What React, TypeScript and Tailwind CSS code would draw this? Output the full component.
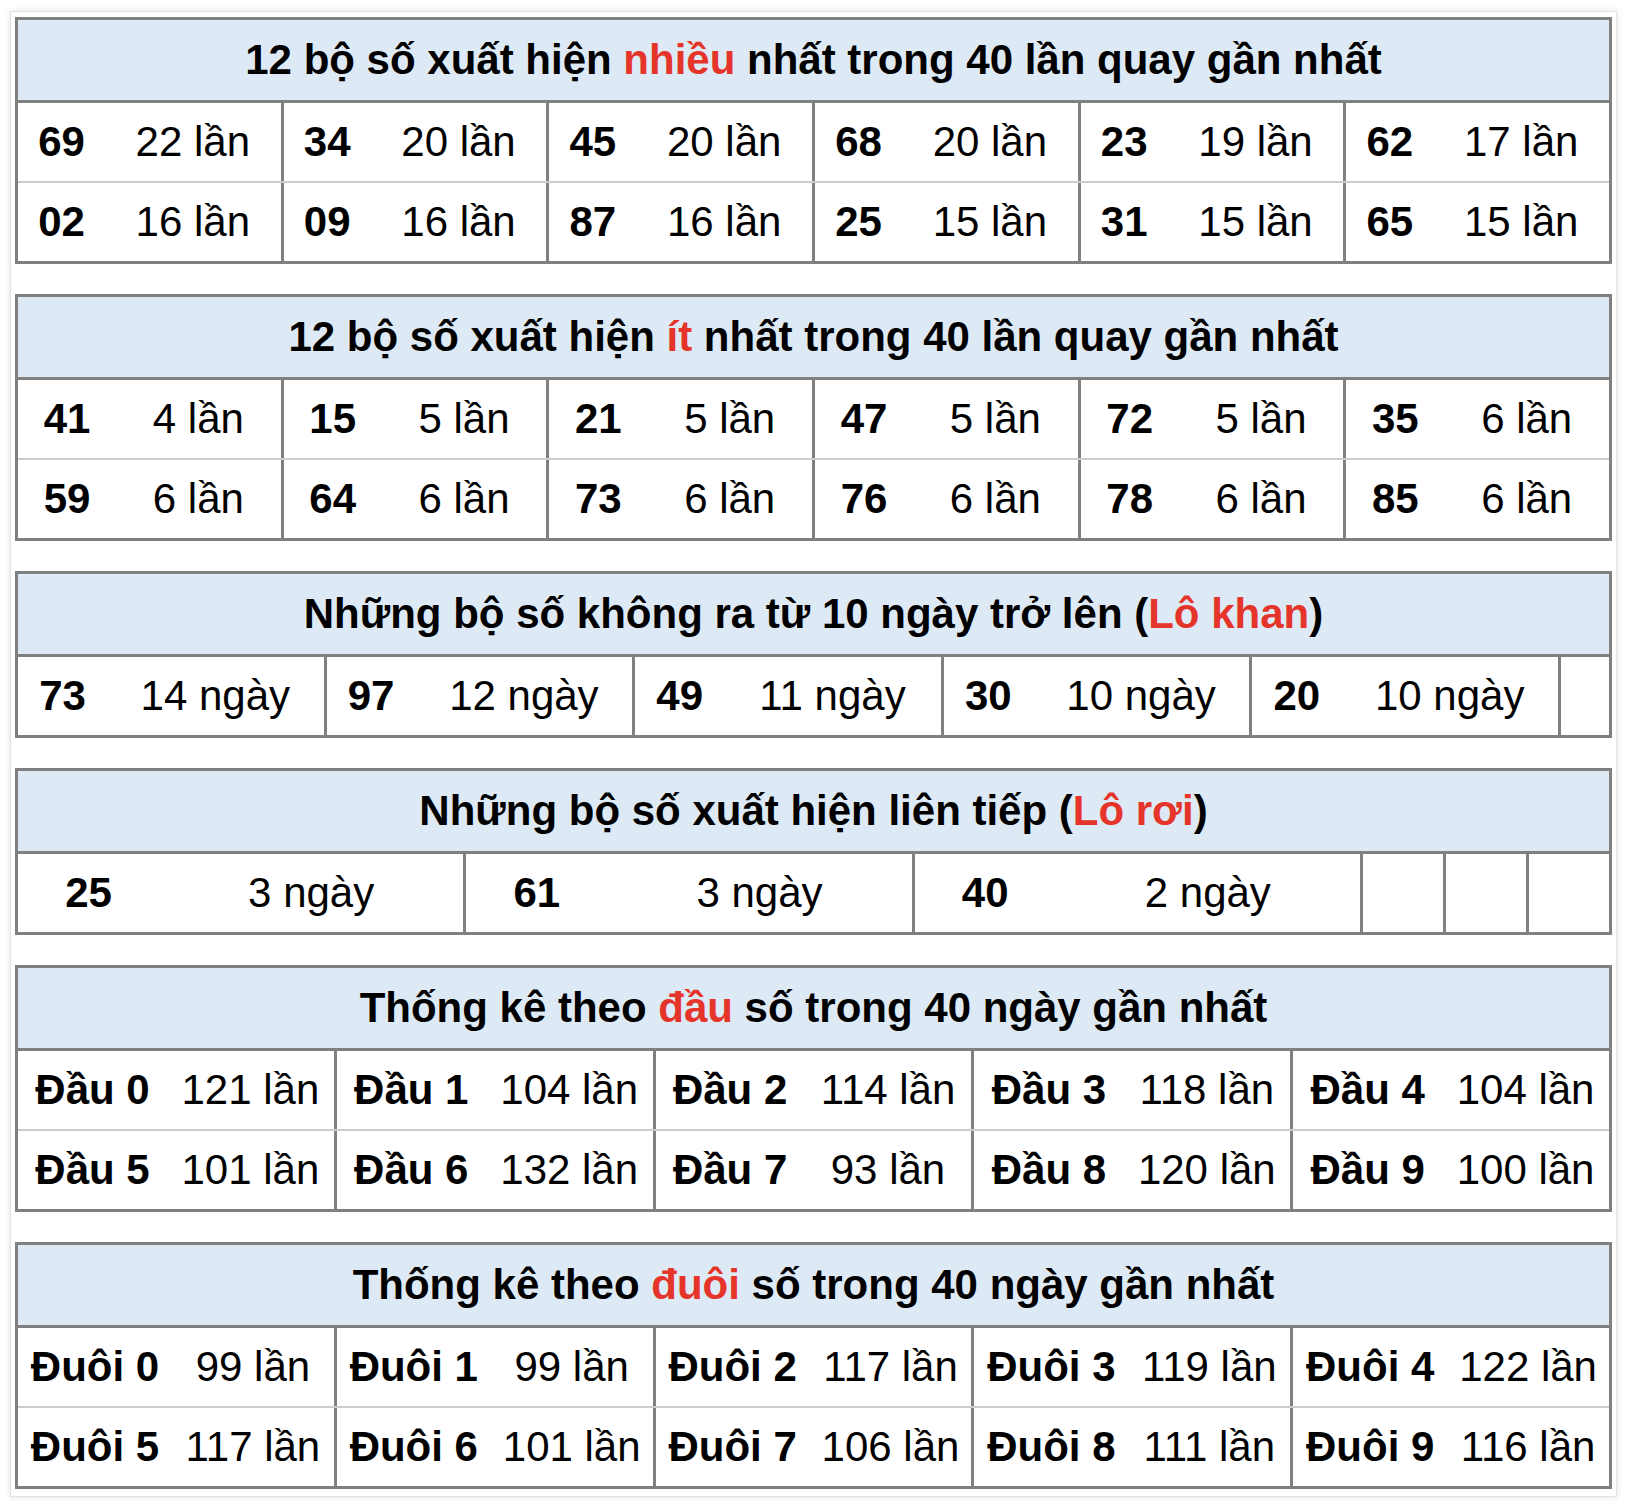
import React from "react";

type Part = { t: string; red?: boolean };
type Pair = [string, string];
type StatTable = {
  title: Part[];
  numW: string;
  rows: Pair[][];
  empty?: string[];
};

const tables: StatTable[] = [
  {
    title: [{ t: "12 bộ số xuất hiện " }, { t: "nhiều", red: true }, { t: " nhất trong 40 lần quay gần nhất" }],
    numW: "w-[87px]",
    rows: [
      [["69", "22 lần"], ["34", "20 lần"], ["45", "20 lần"], ["68", "20 lần"], ["23", "19 lần"], ["62", "17 lần"]],
      [["02", "16 lần"], ["09", "16 lần"], ["87", "16 lần"], ["25", "15 lần"], ["31", "15 lần"], ["65", "15 lần"]],
    ],
  },
  {
    title: [{ t: "12 bộ số xuất hiện " }, { t: "ít", red: true }, { t: " nhất trong 40 lần quay gần nhất" }],
    numW: "w-[98px]",
    rows: [
      [["41", "4 lần"], ["15", "5 lần"], ["21", "5 lần"], ["47", "5 lần"], ["72", "5 lần"], ["35", "6 lần"]],
      [["59", "6 lần"], ["64", "6 lần"], ["73", "6 lần"], ["76", "6 lần"], ["78", "6 lần"], ["85", "6 lần"]],
    ],
  },
  {
    title: [{ t: "Những bộ số không ra từ 10 ngày trở lên (" }, { t: "Lô khan", red: true }, { t: ")" }],
    numW: "w-[89px]",
    rows: [[["73", "14 ngày"], ["97", "12 ngày"], ["49", "11 ngày"], ["30", "10 ngày"], ["20", "10 ngày"]]],
    empty: ["w-[51px]"],
  },
  {
    title: [{ t: "Những bộ số xuất hiện liên tiếp (" }, { t: "Lô rơi", red: true }, { t: ")" }],
    numW: "w-[141px]",
    rows: [[["25", "3 ngày"], ["61", "3 ngày"], ["40", "2 ngày"]]],
    empty: ["w-[83px]", "w-[83px]", "w-[83px]"],
  },
  {
    title: [{ t: "Thống kê theo " }, { t: "đầu", red: true }, { t: " số trong 40 ngày gần nhất" }],
    numW: "w-[149px]",
    rows: [
      [["Đầu 0", "121 lần"], ["Đầu 1", "104 lần"], ["Đầu 2", "114 lần"], ["Đầu 3", "118 lần"], ["Đầu 4", "104 lần"]],
      [["Đầu 5", "101 lần"], ["Đầu 6", "132 lần"], ["Đầu 7", "93 lần"], ["Đầu 8", "120 lần"], ["Đầu 9", "100 lần"]],
    ],
  },
  {
    title: [{ t: "Thống kê theo " }, { t: "đuôi", red: true }, { t: " số trong 40 ngày gần nhất" }],
    numW: "w-[154px]",
    rows: [
      [["Đuôi 0", "99 lần"], ["Đuôi 1", "99 lần"], ["Đuôi 2", "117 lần"], ["Đuôi 3", "119 lần"], ["Đuôi 4", "122 lần"]],
      [["Đuôi 5", "117 lần"], ["Đuôi 6", "101 lần"], ["Đuôi 7", "106 lần"], ["Đuôi 8", "111 lần"], ["Đuôi 9", "116 lần"]],
    ],
  },
];

function StatBlock({ table }: { table: StatTable }) {
  return (
    <div className="border-[3px] border-[#808080]">
      <div className="flex h-[83px] items-center justify-center border-b-[3px] border-[#808080] bg-[#dde9f5] font-bold">
        {table.title.map((p, i) => (
          <span key={i} className={p.red ? "whitespace-pre text-[#e5352a]" : "whitespace-pre"}>
            {p.t}
          </span>
        ))}
      </div>
      {table.rows.map((row, i) => (
        <div key={i} className={i > 0 ? "flex h-[80px] border-t-2 border-[#cccccc]" : "flex h-[78px]"}>
          {row.map(([num, count], j) => (
            <div key={j} className={j > 0 ? "flex flex-1 items-center border-l-[3px] border-[#808080]" : "flex flex-1 items-center"}>
              <span className={`${table.numW} shrink-0 text-center font-bold`}>{num}</span>
              <span className="flex-1 whitespace-nowrap text-center">{count}</span>
            </div>
          ))}
          {table.empty?.map((w, k) => (
            <div key={k} className={`${w} shrink-0 border-l-[3px] border-[#808080]`} />
          ))}
        </div>
      ))}
    </div>
  );
}

export default function App() {
  return (
    <div className="min-h-screen bg-white pt-[11px]" style={{ fontFamily: '"Liberation Sans", Arial, Helvetica, sans-serif' }}>
      <div className="ml-[10px] flex w-[1607px] flex-col gap-[30px] border border-[#e3e3e3] bg-white px-[4px] pb-[7px] pt-[5px] text-[42px] leading-none text-black shadow-[0_0_6px_rgba(0,0,0,0.12)]">
        {tables.map((t, i) => (
          <StatBlock key={i} table={t} />
        ))}
      </div>
    </div>
  );
}
